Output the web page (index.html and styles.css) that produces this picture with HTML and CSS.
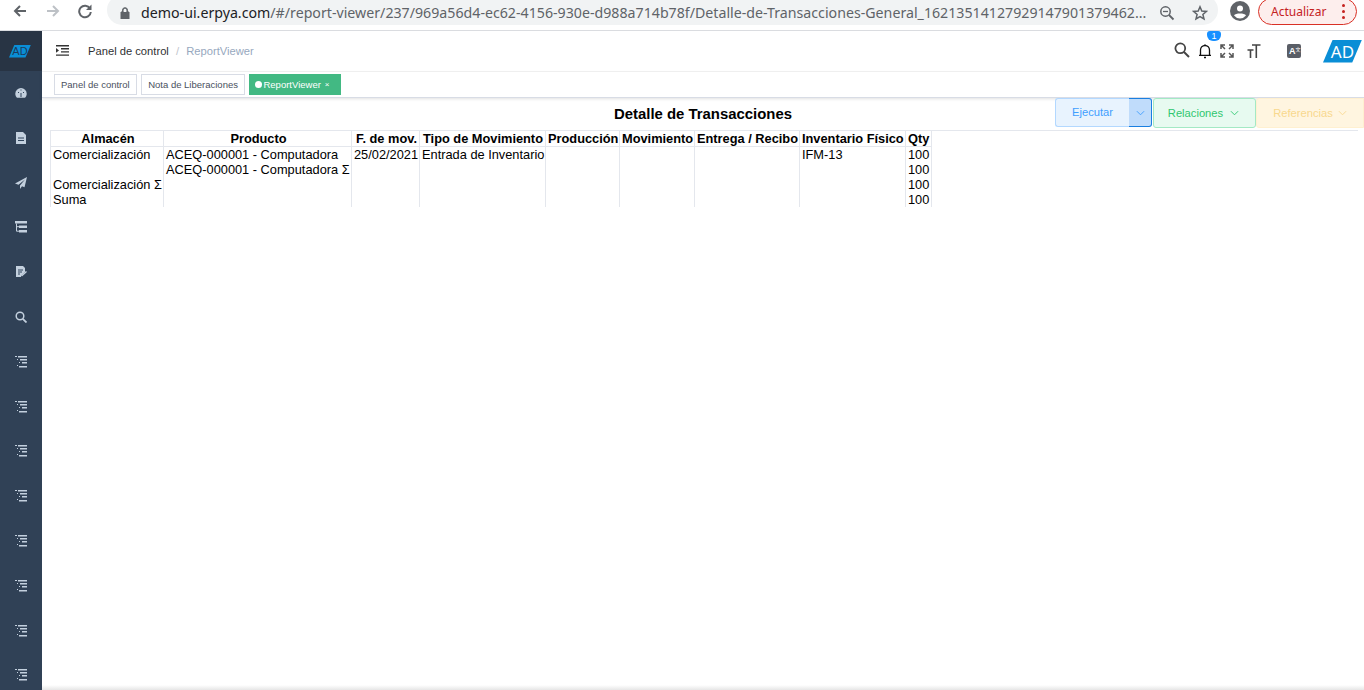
FILE: index.html
```html
<!DOCTYPE html>
<html lang="es">
<head>
    <meta charset="UTF-8">
    <title>ReportViewer</title>
    <link rel="stylesheet" href="styles.css">
</head>
<body>
    <svg class="defs" width="0" height="0">
        <symbol id="tree" viewBox="0 0 12 12">
            <path d="M0 0h2v1H0zM3 0h9v1.5H3zM2 3h1v1H2zM5 3h7v1.5H5zM4 6h1v1H4zM7 6h5v1.5H7zM2 9h1v1H2zM4 10h8v1.5H4z" fill="#c3d0de"/>
        </symbol>
    </svg>

    <div class="browser-bar">
        <div class="nav-icons">
            <svg class="nav-icon" viewBox="0 0 16 16"><path d="M14 8H3M8 3L3 8l5 5" fill="none" stroke="#5f6368" stroke-width="2"/></svg>
            <svg class="nav-icon" viewBox="0 0 16 16"><path d="M2 8h11M8 3l5 5-5 5" fill="none" stroke="#bdc1c6" stroke-width="2"/></svg>
            <svg class="nav-icon" viewBox="0 0 16 16"><path d="M13 5.5A5.8 5.8 0 1 0 13.8 9" fill="none" stroke="#5f6368" stroke-width="2"/><path d="M14.5 1.5v5.5H9z" fill="#5f6368"/></svg>
        </div>
        <div class="omnibox">
            <svg class="lock" viewBox="0 0 10 12"><path d="M1 5h8v7H1zM2.5 5V3.2a2.5 2.5 0 0 1 5 0V5" fill="#5f6368" stroke="#5f6368"/><path d="M3.6 5V3.2a1.4 1.4 0 0 1 2.8 0V5z" fill="#f1f3f4"/></svg>
            <div class="url"><span class="host">demo-ui.erpya.com</span>/#/report-viewer/237/969a56d4-ec62-4156-930e-d988a714b78f/Detalle-de-Transacciones-General_16213514127929147901379462...</div>
            <svg class="omni-icon" viewBox="0 0 16 16"><circle cx="6.5" cy="6.5" r="4.7" fill="none" stroke="#5f6368" stroke-width="1.5"/><path d="M10 10l4.5 4.5" stroke="#5f6368" stroke-width="1.8"/><path d="M4 6.5h5" stroke="#5f6368" stroke-width="1.3"/></svg>
            <svg class="omni-icon star" viewBox="0 0 16 16"><path d="M8 1.8l1.8 4.2 4.6.4-3.5 3 1.1 4.5L8 11.5l-4 2.4 1.1-4.5-3.5-3 4.6-.4z" fill="none" stroke="#5f6368" stroke-width="1.5"/></svg>
        </div>
        <svg class="account" viewBox="0 0 20 20"><circle cx="10" cy="10" r="10" fill="#5f6368"/><circle cx="10" cy="7.4" r="3" fill="#fff"/><path d="M4 14.5c1.5-2.6 10.5-2.6 12 0a7.6 7.6 0 0 1-12 0z" fill="#fff"/></svg>
        <div class="update">Actualizar<span class="update-dots"><i></i><i></i><i></i></span></div>
    </div>

    <div class="app">
        <aside class="sidebar">
            <div class="side-logo"><div class="side-logo-mark">AD</div></div>
            <div class="side-menu">
                <svg class="side-icon" viewBox="0 0 12 12"><path d="M6 1a5.7 5.7 0 0 0-5.7 5.7c0 1.7.7 3 1.7 4h8c1-1 1.7-2.3 1.7-4A5.7 5.7 0 0 0 6 1z" fill="#c3d0de"/><path d="M6 10V6M3 5l1 1M9 5L8 6M6 2.5v1" stroke="#2f435a"/></svg>
                <svg class="side-icon" viewBox="0 0 12 12"><path d="M1 0h7l3 3v9H1z" fill="#c3d0de"/><path d="M3 6h6M3 8.5h6" stroke="#2f435a"/></svg>
                <svg class="side-icon" viewBox="0 0 12 12"><path d="M12 0L0 6.5l3.5 1.3L10 2.5 5 8.5V12l2-2.7 2.5 1z" fill="#c3d0de"/></svg>
                <svg class="side-icon" viewBox="0 0 12 12"><path d="M0 0h12v2.5H0zM4 4.5h8V7H4zM4 9h8v2.5H4z" fill="#c3d0de"/><path d="M1.5 2.5V10.2H4M1.5 5.7H4" fill="none" stroke="#c3d0de"/></svg>
                <svg class="side-icon" viewBox="0 0 12 12"><path d="M1 0h7l2 2v4l-4 4v1H1z" fill="#c3d0de"/><path d="M3 4h5M3 6h4M3 8h2" stroke="#2f435a"/><path d="M6.5 10l5-4.5" stroke="#c3d0de" stroke-width="1.4"/></svg>
                <svg class="side-icon" viewBox="0 0 12 12"><circle cx="5" cy="5" r="3.8" fill="none" stroke="#c3d0de" stroke-width="1.5"/><path d="M7.8 7.8L11.5 11.5" stroke="#c3d0de" stroke-width="1.8"/></svg>
                <svg class="side-icon"><use href="#tree"/></svg>
                <svg class="side-icon"><use href="#tree"/></svg>
                <svg class="side-icon"><use href="#tree"/></svg>
                <svg class="side-icon"><use href="#tree"/></svg>
                <svg class="side-icon"><use href="#tree"/></svg>
                <svg class="side-icon"><use href="#tree"/></svg>
                <svg class="side-icon"><use href="#tree"/></svg>
                <svg class="side-icon"><use href="#tree"/></svg>
            </div>
        </aside>

        <main class="main">
            <header class="topbar">
                <svg class="hamburger" viewBox="0 0 13 11"><path d="M0 0h13v1.4H0zM5 3.1h8v1.4H5zM5 6.2h8v1.4H5zM0 9.4h13v1.4H0zM0 3l3 2.4-3 2.4z" fill="#333"/></svg>
                <div class="crumbs">
                    <span class="crumb-link">Panel de control</span>
                    <span class="crumb-sep">/</span>
                    <span class="crumb-now">ReportViewer</span>
                </div>
                <div class="top-tools">
                    <svg class="tool tool-search" viewBox="0 0 16 16"><circle cx="6.3" cy="6.3" r="4.9" fill="none" stroke="#444" stroke-width="1.8"/><path d="M10 10l5 5" stroke="#444" stroke-width="2"/></svg>
                    <div class="bell">
                        <svg class="tool" viewBox="0 0 14 16"><path d="M2.5 12V7a4.5 4.5 0 0 1 9 0v5M1 12.3h12" fill="none" stroke="#111" stroke-width="1.3"/><path d="M6 14.5h2M6.5 2h1" stroke="#111" stroke-width="1.5"/></svg>
                        <span class="badge">1</span>
                    </div>
                    <svg class="tool tool-full" viewBox="0 0 14 14"><path d="M1 5V1h4M1 1l4 4M9 1h4v4M13 1L9 5M1 9v4h4M1 13l4-4M13 9v4H9M13 13L9 9" fill="none" stroke="#555" stroke-width="1.5"/></svg>
                    <svg class="tool tool-size" viewBox="0 0 14 14"><path d="M5 1h8.5M9.3 1V14M0.5 6h6M3.5 6V14" fill="none" stroke="#444" stroke-width="1.6"/></svg>
                    <div class="lang">A<sup class="lang-sup">文</sup></div>
                    <div class="brand">AD</div>
                </div>
            </header>

            <nav class="tabs">
                <div class="tab">Panel de control</div>
                <div class="tab">Nota de Liberaciones</div>
                <div class="tab tab-active"><i class="tab-dot"></i>ReportViewer<span class="tab-close">×</span></div>
            </nav>

            <section class="report">
                <div class="report-head">
                    <h1 class="report-title">Detalle de Transacciones</h1>
                    <div class="actions">
                        <div class="btn btn-run">Ejecutar</div>
                        <div class="btn-caret"><svg class="chev" viewBox="0 0 10 6"><path d="M1 1l4 4 4-4" fill="none" stroke="#409eff"/></svg></div>
                        <div class="btn btn-rel">Relaciones<svg class="chev" viewBox="0 0 10 6"><path d="M1 1l4 4 4-4" fill="none" stroke="#2fc76f"/></svg></div>
                        <div class="btn btn-ref">Referencias<svg class="chev" viewBox="0 0 10 6"><path d="M1 1l4 4 4-4" fill="none" stroke="#f8d88e"/></svg></div>
                    </div>
                </div>
                <div class="table-wrap">
                    <table class="report-table">
                        <colgroup>
                            <col class="c1"><col class="c2"><col class="c3"><col class="c4"><col class="c5"><col class="c6"><col class="c7"><col class="c8"><col class="c9">
                        </colgroup>
                        <thead>
                            <tr><th class="th-wide">Almacén</th><th class="th-wide">Producto</th><th class="th-wide">F. de mov.</th><th class="th-mid">Tipo de Movimiento</th><th>Producción</th><th>Movimiento</th><th>Entrega / Recibo</th><th>Inventario Físico</th><th>Qty</th></tr>
                        </thead>
                        <tbody>
                            <tr><td>Comercialización</td><td>ACEQ-000001 - Computadora</td><td>25/02/2021</td><td>Entrada de Inventario</td><td></td><td></td><td></td><td>IFM-13</td><td>100</td></tr>
                            <tr><td></td><td>ACEQ-000001 - Computadora Σ</td><td></td><td></td><td></td><td></td><td></td><td></td><td>100</td></tr>
                            <tr><td>Comercialización Σ</td><td></td><td></td><td></td><td></td><td></td><td></td><td></td><td>100</td></tr>
                            <tr><td>Suma</td><td></td><td></td><td></td><td></td><td></td><td></td><td></td><td>100</td></tr>
                        </tbody>
                    </table>
                </div>
            </section>
            <div class="page-foot"></div>
        </main>
    </div>
</body>
</html>
```

FILE: styles.css
```css
* {
    box-sizing: border-box;
}

html, body {
    margin: 0;
    height: 690px;
    overflow: hidden;
}

body {
    display: flex;
    flex-direction: column;
    background: #fff;
    font-family: "Liberation Sans", Arial, sans-serif;
    color: #000;
}

.defs {
    position: absolute;
}

/* browser chrome */
.browser-bar {
    display: flex;
    align-items: center;
    height: 31px;
    flex: none;
    border-bottom: 1px solid #dadce0;
    padding-bottom: 8px;
    font-family: "Noto Sans", sans-serif;
}

.nav-icons {
    display: flex;
    gap: 16.5px;
    padding-left: 12px;
    width: 107px;
    flex: none;
}

.nav-icon {
    width: 16px;
    height: 16px;
}

.omnibox {
    display: flex;
    align-items: center;
    align-self: flex-start;
    width: 1111px;
    height: 30px;
    margin-top: -5px;
    padding: 5px 0 0 13px;
    background: #f1f3f4;
    border-radius: 15px;
    flex: none;
}

.lock {
    width: 10px;
    height: 12px;
    flex: none;
}

.url {
    margin-left: 11px;
    width: 1008px;
    flex: none;
    font-size: 14.19px;
    color: #5f6368;
    white-space: nowrap;
    overflow: hidden;
}

.host {
    color: #202124;
}

.omni-icon {
    width: 16px;
    height: 16px;
    margin-left: 10px;
    flex: none;
}

.star {
    margin-left: 17px;
}

.account {
    width: 20px;
    height: 20px;
    margin-left: 12px;
    flex: none;
}

.update {
    display: flex;
    align-items: center;
    justify-content: space-between;
    margin-left: 8px;
    width: 99px;
    height: 27px;
    padding: 0 11px 0 12px;
    border: 1px solid #d93025;
    border-radius: 14px;
    background: #fdeeed;
    color: #c5221f;
    font-size: 12px;
    flex: none;
}

.update-dots {
    display: flex;
    flex-direction: column;
    gap: 3px;
}

.update-dots i {
    width: 3px;
    height: 3px;
    border-radius: 50%;
    background: #c5221f;
}

/* app */
.app {
    display: flex;
    flex: 1;
    min-height: 0;
}

.sidebar {
    width: 42px;
    flex: none;
    background: #304156;
    overflow: hidden;
}

.side-logo {
    display: flex;
    align-items: center;
    justify-content: center;
    height: 40px;
    padding: 0 2px 0 0;
    background: #283444;
}

.side-logo-mark {
    width: 22px;
    height: 13px;
    background: #0a8ed6;
    color: #1c3c5c;
    font-size: 11px;
    line-height: 13px;
    text-align: center;
    clip-path: polygon(25% 0, 100% 0, 75% 100%, 0 100%);
}

.side-menu {
    display: flex;
    flex-direction: column;
    align-items: center;
    gap: 32.8px;
    padding: 16px 1px 0 0;
}

.side-icon {
    width: 12px;
    height: 12px;
    flex: none;
}

.main {
    flex: 1;
    min-width: 0;
    display: flex;
    flex-direction: column;
}

.topbar {
    display: flex;
    align-items: center;
    height: 41px;
    flex: none;
    padding-left: 14px;
    border-bottom: 1px solid #f4f4f4;
}

.hamburger {
    width: 13px;
    height: 11px;
    margin-bottom: 2px;
}

.crumbs {
    margin-left: 19px;
    font-size: 11.2px;
}

.crumb-link {
    color: #303133;
}

.crumb-sep {
    color: #c0c4cc;
    margin: 0 4px;
}

.crumb-now {
    color: #97a8be;
}

.top-tools {
    display: flex;
    align-items: center;
    margin-left: auto;
}

.tool {
    width: 16px;
    height: 16px;
    display: block;
}

.tool-search {
    margin-right: 8px;
    margin-bottom: 2px;
}

.bell {
    position: relative;
    width: 14px;
}

.bell .tool {
    width: 14px;
}

.badge {
    position: absolute;
    top: -12px;
    left: 9px;
    width: 14px;
    height: 10px;
    border-radius: 3px 3px 6px 6px;
    background: #1890ff;
    color: #fff;
    font-size: 9px;
    line-height: 10px;
    text-align: center;
}

.tool-full {
    width: 14px;
    height: 14px;
    margin-left: 8px;
}

.tool-size {
    width: 14px;
    height: 14px;
    margin-left: 13px;
}

.lang {
    width: 14px;
    height: 14px;
    margin-left: 26px;
    background: #5a5e66;
    border-radius: 2px;
    color: #fff;
    font-size: 9px;
    line-height: 14px;
    padding-left: 2px;
    font-weight: bold;
    white-space: nowrap;
    overflow: hidden;
}

.lang-sup {
    font-size: 5px;
    vertical-align: top;
    line-height: 9px;
    font-weight: normal;
    font-family: "Noto Sans CJK SC", sans-serif;
}

.brand {
    width: 39px;
    height: 23px;
    margin-left: 22px;
    margin-right: 2px;
    background: #0a8ed6;
    color: #fff;
    font-family: "Noto Sans", sans-serif;
    font-size: 17px;
    line-height: 23px;
    text-align: center;
    clip-path: polygon(25% 0, 100% 0, 75% 100%, 0 100%);
}

.tabs {
    display: flex;
    align-items: center;
    gap: 4.5px;
    height: 26px;
    flex: none;
    padding-left: 12px;
    border-bottom: 1px solid #d8dce5;
    box-shadow: 0 1px 3px rgba(0, 0, 0, .12);
}

.tab {
    display: flex;
    align-items: center;
    height: 21px;
    padding: 0 6px;
    border: 1px solid #d8dce5;
    font-size: 9.5px;
    color: #495060;
}

.tab-active {
    padding: 0 10px 0 5px;
    background: #42b983;
    border-color: #42b983;
    color: #fff;
}

.tab-dot {
    width: 7px;
    height: 7px;
    border-radius: 50%;
    background: #fff;
    margin-right: 1px;
}

.tab-close {
    margin-left: 4px;
    font-size: 8px;
}

/* report */
.report {
    flex: 1;
    min-height: 0;
}

.report-head {
    position: relative;
    height: 32px;
}

.report-title {
    margin: 0;
    text-align: center;
    font-size: 14.9px;
    line-height: 32px;
    font-weight: bold;
}

.actions {
    position: absolute;
    top: 0;
    right: 0;
    display: flex;
    height: 30px;
}

.btn {
    display: flex;
    align-items: center;
    justify-content: center;
    gap: 5px;
    height: 30px;
    font-size: 11.2px;
    border: 1px solid;
    border-radius: 3px;
}

.btn-run {
    width: 74px;
    height: 29px;
    color: #409eff;
    background: #e8f3fe;
    border-color: #b3d8ff;
    border-right: 0;
    border-radius: 3px 0 0 3px;
    padding-bottom: 2px;
}

.btn-caret {
    display: flex;
    align-items: center;
    justify-content: center;
    width: 23px;
    height: 29px;
    background: #c0dcfb;
    border: 1px solid #1a7fe0;
    border-left: 0;
    border-radius: 0 3px 3px 0;
}

.btn-rel {
    width: 103px;
    margin-left: 1px;
    gap: 7px;
    padding-right: 2px;
    color: #2fc76f;
    background: #e7faf0;
    border-color: #a3e9c4;
}

.btn-ref {
    width: 108px;
    color: #f8d88e;
    background: #fff5e0;
    border-color: #fff0d0;
    border-radius: 3px 0 0 3px;
}

.chev {
    width: 9px;
    height: 6px;
}

.table-wrap {
    border-top: 1px solid #e4e7ed;
    margin: 0 6px 0 8px;
}

.report-table {
    border-collapse: collapse;
    table-layout: fixed;
    width: 881px;
    font-size: 12.8px;
    line-height: 15px;
}

.report-table th,
.report-table td {
    padding: 0 0 0 2px;
    border-left: 1px solid #e4e7ed;
    border-right: 1px solid #e4e7ed;
    white-space: nowrap;
    height: 15px;
    overflow: hidden;
}

.report-table th {
    text-align: center;
    padding: 0 2px;
    height: 15px;
    border-bottom: 1px solid #e4e7ed;
}

.report-table .th-mid {
    padding-left: 3px;
}

.report-table .th-wide {
    padding-left: 4px;
}

.c1 { width: 113px; }
.c2 { width: 188px; }
.c3 { width: 68px; }
.c4 { width: 126px; }
.c5 { width: 74px; }
.c6 { width: 75px; }
.c7 { width: 105px; }
.c8 { width: 106px; }
.c9 { width: 26px; }

.page-foot {
    height: 5px;
    flex: none;
    background: linear-gradient(#fff, #e6e6e6);
}
```
